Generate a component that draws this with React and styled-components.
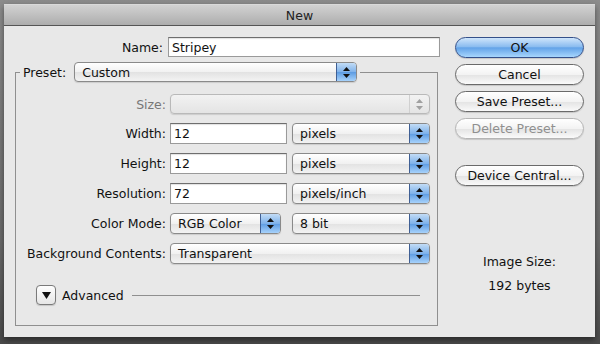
import React from 'react';
import styled, { createGlobalStyle, css } from 'styled-components';

const Global = createGlobalStyle`
  html, body {
    margin: 0;
    padding: 0;
    background: #6f6f6f;
  }
  * { box-sizing: border-box; }
`;

const Page = styled.div`
  width: 600px;
  height: 344px;
  padding: 4px 5px 0 4px;
  background: linear-gradient(#8c8c8c, #6a6a6a 70%, #4a4a4a);
  font-family: "Lucida Grande", "DejaVu Sans", sans-serif;
  font-size: 12.5px;
  color: #111;
`;

const Window = styled.div`
  width: 591px;
  height: 333px;
  display: flex;
  flex-direction: column;
  box-shadow: 0 3px 6px rgba(0, 0, 0, 0.45);
`;

const TitleBar = styled.div`
  height: 22px;
  display: flex;
  align-items: center;
  justify-content: center;
  background: linear-gradient(#d2d2d2, #adadad);
  border-top: 1px solid #dadada;
  border-bottom: 1px solid #555;
  color: #222;
`;

const Body = styled.div`
  flex: 1;
  display: flex;
  padding: 11px 0 0 11px;
  background: #e8e8e8;
`;

const LeftCol = styled.div`
  width: 425px;
  display: flex;
  flex-direction: column;
`;

const NameRow = styled.div`
  display: grid;
  grid-template-columns: 148px 272px;
  column-gap: 5px;
  align-items: center;
`;

const Label = styled.span`
  text-align: right;
  white-space: nowrap;
  color: ${p => (p.$disabled ? '#777' : '#111')};
`;

const TextField = styled.div`
  height: ${p => p.$h || 21}px;
  width: ${p => p.$w ? `${p.$w}px` : 'auto'};
  display: flex;
  align-items: center;
  padding-left: 3px;
  background: #fff;
  border: 1px solid #9a9a9a;
  border-top-color: #6e6e6e;
  box-shadow: inset 0 1px 1px rgba(0, 0, 0, 0.12);
`;

const Group = styled.fieldset`
  width: 423px;
  margin: 5px 0 0 0;
  padding: 12px 0 20px 0;
  border: 1px solid #8f8f8f;
  border-radius: 0;
  min-width: 0;
`;

const Legend = styled.legend`
  display: flex;
  align-items: center;
  gap: 8px;
  margin-left: 4px;
  padding: 0 3px 0 3px;
`;

const Rows = styled.div`
  display: grid;
  grid-template-columns: 150px 260px;
  column-gap: 4px;
  row-gap: 9px;
  align-items: center;
`;

const Pair = styled.div`
  display: flex;
  justify-content: space-between;
`;

const PopupBox = styled.div`
  position: relative;
  height: ${p => p.$h || 21}px;
  width: ${p => (p.$w ? `${p.$w}px` : '100%')};
  display: flex;
  align-items: center;
  padding-left: 7px;
  border: 1px solid ${p => (p.$disabled ? '#b9b9b9' : '#8a8a8a')};
  border-radius: 4px;
  background: ${p => p.$disabled
    ? 'linear-gradient(#f2f2f2, #e4e4e4)'
    : 'linear-gradient(#ffffff, #f1f1f1 50%, #e2e2e2 51%, #f3f3f3)'};
  box-shadow: 0 1px 1px rgba(0, 0, 0, 0.12);
  overflow: hidden;
`;

const PopupArrow = styled.div`
  position: absolute;
  top: 0;
  right: 0;
  bottom: 0;
  width: 20px;
  display: flex;
  align-items: center;
  justify-content: center;
  ${p => p.$disabled
    ? css`
        border-left: 1px solid #d0d0d0;
        background: transparent;
      `
    : css`
        border-left: 1px solid #3f5f94;
        background: linear-gradient(#c2dcf6, #7fb2ea 50%, #5c9be2 51%, #a7d2fb);
      `}
`;

const Arrows = ({ color }) => (
  <svg width="7" height="11" viewBox="0 0 7 11">
    <path d="M3.5 0 L7 4 L0 4 Z" fill={color} />
    <path d="M0 7 L7 7 L3.5 11 Z" fill={color} />
  </svg>
);

const Popup = ({ children, w, h, disabled }) => (
  <PopupBox $w={w} $h={h} $disabled={disabled}>
    {children}
    <PopupArrow $disabled={disabled}>
      <Arrows color={disabled ? '#a0a0a0' : '#111'} />
    </PopupArrow>
  </PopupBox>
);

const AdvancedRow = styled.div`
  display: flex;
  align-items: center;
  margin: 21px 0 0 20px;
  padding-right: 17px;
`;

const Disclosure = styled.div`
  width: 20px;
  height: 20px;
  display: flex;
  align-items: center;
  justify-content: center;
  border: 1px solid #7a7a7a;
  border-radius: 4px;
  background: linear-gradient(#fefefe, #e6e6e6);
  box-shadow: 0 1px 1px rgba(0, 0, 0, 0.15);
`;

const AdvancedText = styled.span`
  margin-left: 6px;
`;

const Rule = styled.div`
  flex: 1;
  height: 1px;
  margin-left: 8px;
  background: #8f8f8f;
`;

const RightCol = styled.div`
  width: 129px;
  margin-left: 15px;
  display: flex;
  flex-direction: column;
  gap: 6px;
`;

const Button = styled.div`
  height: 21px;
  display: flex;
  align-items: center;
  justify-content: center;
  margin-top: ${p => p.$gapAbove || 0}px;
  border-radius: 11px;
  border: 1px solid ${p => (p.$disabled ? '#b5b5b5' : '#6a6a6a')};
  color: ${p => (p.$disabled ? '#8f8f8f' : '#111')};
  background: linear-gradient(#ffffff, #f3f3f3 50%, #e3e3e3 51%, #fafafa);
  box-shadow: 0 1px 1px rgba(0, 0, 0, 0.15);
  ${p => p.$primary && css`
    border-color: #34508a;
    background: linear-gradient(#cfe5fb, #8cbdf0 45%, #63a3e8 52%, #a7d6fd);
  `}
`;

const ImageInfo = styled.div`
  margin-top: 62px;
  display: flex;
  flex-direction: column;
  align-items: center;
  gap: 9px;
  color: #111;
`;

export default function App() {
  return (
    <>
      <Global />
      <Page>
        <Window>
          <TitleBar>New</TitleBar>
          <Body>
            <LeftCol>
              <NameRow>
                <Label>Name:</Label>
                <TextField $h={20}>Stripey</TextField>
              </NameRow>
              <Group>
                <Legend>
                  <Label>Preset:</Label>
                  <Popup w={283} h={20}>Custom</Popup>
                </Legend>
                <Rows>
                  <Label $disabled>Size:</Label>
                  <Popup disabled h={20} />

                  <Label>Width:</Label>
                  <Pair>
                    <TextField $w={117}>12</TextField>
                    <Popup w={138}>pixels</Popup>
                  </Pair>

                  <Label>Height:</Label>
                  <Pair>
                    <TextField $w={117}>12</TextField>
                    <Popup w={138}>pixels</Popup>
                  </Pair>

                  <Label>Resolution:</Label>
                  <Pair>
                    <TextField $w={117}>72</TextField>
                    <Popup w={138}>pixels/inch</Popup>
                  </Pair>

                  <Label>Color Mode:</Label>
                  <Pair>
                    <Popup w={111}>RGB Color</Popup>
                    <Popup w={138}>8 bit</Popup>
                  </Pair>

                  <Label>Background Contents:</Label>
                  <Popup>Transparent</Popup>
                </Rows>
                <AdvancedRow>
                  <Disclosure>
                    <svg width="9" height="7" viewBox="0 0 9 7">
                      <path d="M0 0 L9 0 L4.5 7 Z" fill="#111" />
                    </svg>
                  </Disclosure>
                  <AdvancedText>Advanced</AdvancedText>
                  <Rule />
                </AdvancedRow>
              </Group>
            </LeftCol>
            <RightCol>
              <Button $primary>OK</Button>
              <Button>Cancel</Button>
              <Button>Save Preset...</Button>
              <Button $disabled>Delete Preset...</Button>
              <Button $gapAbove={20}>Device Central...</Button>
              <ImageInfo>
                <span>Image Size:</span>
                <span>192 bytes</span>
              </ImageInfo>
            </RightCol>
          </Body>
        </Window>
      </Page>
    </>
  );
}
